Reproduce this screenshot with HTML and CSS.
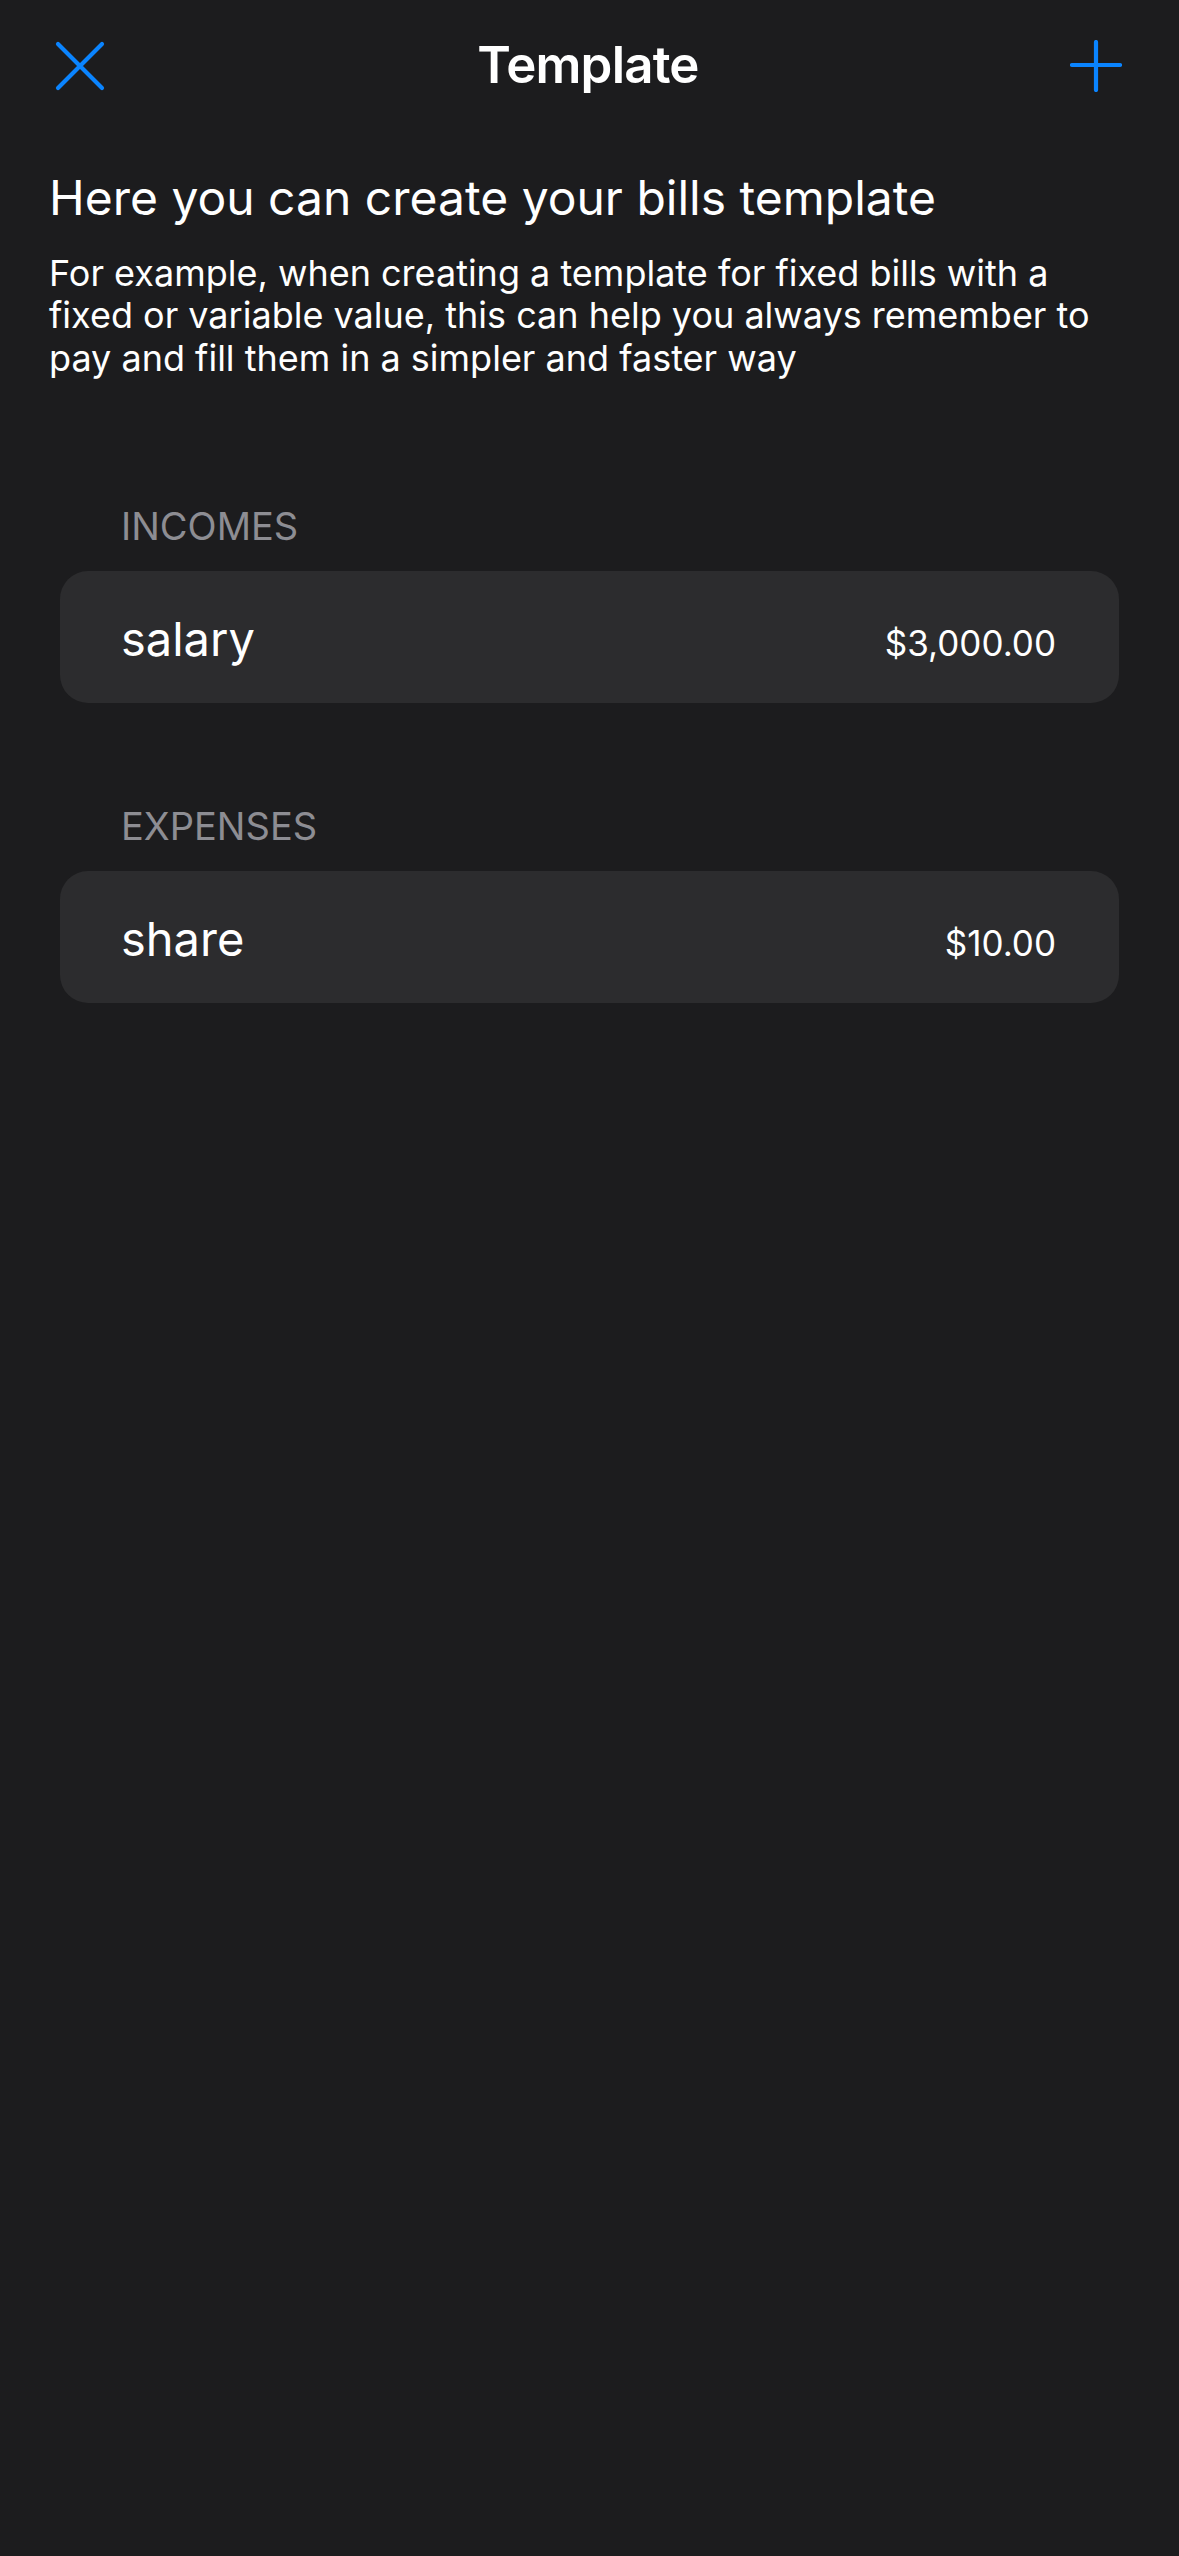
FILE: index.html
```html
<!DOCTYPE html>
<html lang="en">
<head>
<meta charset="utf-8">
<title>Template</title>
<link rel="stylesheet" href="styles.css">
</head>
<body>
<div class="screen">
  <header class="navbar">
    <button class="nav-btn nav-close" aria-label="Close">
      <svg width="52" height="52" viewBox="0 0 52 52"><path d="M4 4 L48 48 M48 4 L4 48" stroke="#0a84ff" stroke-width="4.2" stroke-linecap="round" fill="none"/></svg>
    </button>
    <h1 class="nav-title">Template</h1>
    <button class="nav-btn nav-add" aria-label="Add">
      <svg width="52" height="52" viewBox="0 0 52 52"><path d="M26 2 L26 50 M2 25 L50 25" stroke="#0a84ff" stroke-width="4.2" stroke-linecap="round" fill="none"/></svg>
    </button>
  </header>

  <section class="intro">
    <h2 class="intro-title">Here you can create your bills template</h2>
    <p class="intro-text">For example, when creating a template for fixed bills with a fixed or variable value, this can help you always remember to pay and fill them in a simpler and faster way</p>
  </section>

  <section class="group group-first">
    <h3 class="group-title">INCOMES</h3>
    <div class="card">
      <span class="item-name">salary</span>
      <span class="item-value">$3,000.00</span>
    </div>
  </section>

  <section class="group">
    <h3 class="group-title">EXPENSES</h3>
    <div class="card">
      <span class="item-name">share</span>
      <span class="item-value">$10.00</span>
    </div>
  </section>
</div>
</body>
</html>
```

FILE: styles.css
```css
html, body {
  margin: 0;
  padding: 0;
  background: #1c1c1e;
}

body {
  font-family: Inter, "Noto Sans", "Liberation Sans", sans-serif;
  color: #ffffff;
  -webkit-font-smoothing: antialiased;
}

.screen {
  min-height: 2556px;
  background: #1c1c1e;
}

.navbar {
  display: grid;
  grid-template-columns: 1fr auto 1fr;
  align-items: center;
  height: 132px;
  padding: 0 57px 0 54px;
  box-sizing: border-box;
}

.nav-btn {
  background: none;
  border: 0;
  padding: 0;
  margin: 0;
  width: 52px;
  height: 52px;
  display: block;
}

.nav-btn svg {
  display: block;
}

.nav-close {
  justify-self: start;
}

.nav-add {
  justify-self: end;
}

.nav-title {
  margin: 0;
  font-size: 51px;
  line-height: 58px;
  font-weight: 600;
  letter-spacing: -0.8px;
  color: #ffffff;
  transform: translateY(-1px);
}

.intro {
  padding: 38px 49px 0;
}

.intro-title {
  margin: 0;
  font-size: 48px;
  line-height: 56px;
  font-weight: 400;
  letter-spacing: 0;
}

.intro-text {
  margin: 26px 0 0;
  font-size: 36px;
  line-height: 42.4px;
  font-weight: 400;
  letter-spacing: 0;
}

.group {
  padding: 0 60px;
  margin-top: 100px;
}

.group-first {
  margin-top: 124px;
}

.group-title {
  margin: 0;
  padding-left: 61px;
  font-size: 38px;
  line-height: 46px;
  font-weight: 400;
  color: #8d8d93;
}

.card {
  margin-top: 22px;
  height: 132px;
  box-sizing: border-box;
  padding: 43px 63px 0 61px;
  background: #2c2c2e;
  border-radius: 28px;
  display: flex;
  align-items: baseline;
  justify-content: space-between;
}

.item-name {
  font-size: 47px;
  line-height: 50px;
}

.item-value {
  font-size: 35px;
  line-height: 40px;
}
```
